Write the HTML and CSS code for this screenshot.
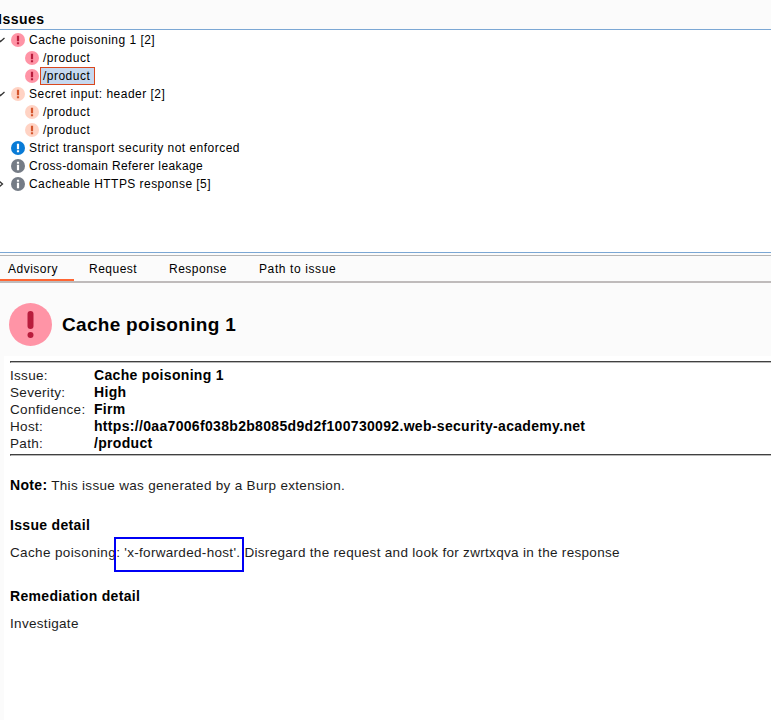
FILE: index.html
```html
<!DOCTYPE html>
<html lang="en">
<head>
<meta charset="utf-8">
<title>Issues</title>
<link rel="stylesheet" href="styles.css">
</head>
<body>
<svg class="defs" aria-hidden="true">
  <symbol id="bang" viewBox="0 0 43 43">
    <circle class="disc" cx="21.5" cy="21.5" r="21.5"/>
    <path class="mark" d="M21.5 11v12" stroke-width="6" stroke-linecap="round"/>
    <circle class="dot" cx="21.5" cy="32" r="3"/>
  </symbol>
  <symbol id="bang-small" viewBox="0 0 14 14">
    <circle class="disc" cx="7" cy="7" r="7"/>
    <path class="mark" d="M7 2.8v5.4M7 9.3v1.9" stroke-width="2.2"/>
  </symbol>
  <symbol id="info" viewBox="0 0 14 14">
    <circle class="disc" cx="7" cy="7" r="7"/>
    <path class="mark" d="M7 2.8v1.9M7 5.8v5.4" stroke-width="2.2"/>
  </symbol>
</svg>
<header class="head"><h1>Issues</h1></header>
<section class="tree">
  <div class="row"><svg class="arrow" viewBox="0 0 6 8"><path d="M-1 4l1.5 1.5L4.5 2"/></svg><svg class="icon high"><use href="#bang-small"/></svg><span class="t1">Cache poisoning 1 [2]</span></div>
  <div class="row child"><svg class="icon high"><use href="#bang-small"/></svg><span class="t2">/product</span></div>
  <div class="row child"><svg class="icon high"><use href="#bang-small"/></svg><span class="t2 selected">/product</span></div>
  <div class="row"><svg class="arrow" viewBox="0 0 6 8"><path d="M-1 4l1.5 1.5L4.5 2"/></svg><svg class="icon medium"><use href="#bang-small"/></svg><span class="t3">Secret input: header [2]</span></div>
  <div class="row child"><svg class="icon medium"><use href="#bang-small"/></svg><span class="t2">/product</span></div>
  <div class="row child"><svg class="icon medium"><use href="#bang-small"/></svg><span class="t2">/product</span></div>
  <div class="row"><svg class="icon low"><use href="#bang-small"/></svg><span class="t4">Strict transport security not enforced</span></div>
  <div class="row"><svg class="icon note"><use href="#info"/></svg><span class="t5">Cross-domain Referer leakage</span></div>
  <div class="row"><svg class="arrow" viewBox="0 0 6 8"><path d="M-1 1l3.5 3L-1 7"/></svg><svg class="icon note"><use href="#info"/></svg><span class="t6">Cacheable HTTPS response [5]</span></div>
</section>
<nav class="tabs">
  <span class="tab active">Advisory</span><span class="tab request">Request</span><span class="tab response">Response</span><span class="tab path">Path to issue</span>
</nav>
<main>
  <div class="title"><svg class="big high"><use href="#bang"/></svg><h2>Cache poisoning 1</h2></div>
  <article class="body">
    <div class="rule"></div>
    <dl class="facts">
      <dt>Issue:</dt><dd>Cache poisoning 1</dd>
      <dt>Severity:</dt><dd>High</dd>
      <dt>Confidence:</dt><dd>Firm</dd>
      <dt>Host:</dt><dd class="host">https://0aa7006f038b2b8085d9d2f100730092.web-security-academy.net</dd>
      <dt>Path:</dt><dd>/product</dd>
    </dl>
    <div class="rule"></div>
    <p class="remark"><b>Note:</b> <span>This issue was generated by a Burp extension.</span></p>
    <h3 class="h-detail">Issue detail</h3>
    <p class="detail"><span class="d1">Cache poisoning</span><span class="marked">: 'x-forwarded-host'.</span> <span class="d2">Disregard the request and look for zwrtxqva in the response</span></p>
    <h3 class="h-fix">Remediation detail</h3>
    <p class="fix">Investigate</p>
  </article>
</main>
</body>
</html>
```
FILE: styles.css
```css
* { box-sizing: border-box; margin: 0; padding: 0; }
body { width: 771px; height: 720px; overflow: hidden; background: #fbfbfb; color: #000; font: 12px/18px "Liberation Sans", sans-serif; white-space: nowrap; }
.defs { position: absolute; width: 0; height: 0; }
.head { height: 30px; padding-top: 10px; border-bottom: 1px solid #7ba7d4; }
h1 { font-size: 14px; line-height: 18px; letter-spacing: .5px; margin-left: -2px; }
.tree { height: 223px; padding-top: 1px; background: #fff; border-bottom: 1px solid #7ba7d4; }
.row { height: 18px; display: flex; align-items: center; padding-left: 11px; position: relative; letter-spacing: .48px; }
.t5 { letter-spacing: .38px; }
.t6 { letter-spacing: .45px; }
.child { padding-left: 25px; }
.arrow { position: absolute; left: 0; top: 5px; width: 6px; height: 8px; fill: none; stroke: #333; stroke-width: 1.3; }
.icon { width: 14px; height: 14px; margin-right: 4px; flex: none; }
.child .icon { margin-right: 1px; }
.t2 { border: 1px solid transparent; height: 18px; line-height: 16px; padding: 0 4px 0 2px; }
.selected { background: #c6d8ef; border-color: #d9481f; width: 55px; }
.mark { fill: none; stroke: currentColor; }
.dot { fill: currentColor; }
.disc { fill: var(--disc); }
.high { --disc: #ff94a6; color: #b81c3c; }
.medium { --disc: #ffd3c4; color: #d4552c; }
.low { --disc: #087bd7; color: #fff; }
.note { --disc: #757c86; color: #fff; }
.tabs { height: 28px; margin-top: 2px; border-top: 1px solid #b5b5b5; border-bottom: 2px solid #bfbbbb; display: flex; line-height: 26px; letter-spacing: .5px; }
.tab { height: 25px; }
.active { width: 74px; padding-left: 8px; border-bottom: 2px solid #ff6633; }
.request { margin-left: 15px; width: 80px; }
.response { width: 90px; }
.path { letter-spacing: .6px; }
.title { height: 73px; display: flex; align-items: center; padding: 10px 0 0 9px; }
.big { width: 43px; height: 43px; margin-right: 10px; }
h2 { font-size: 19px; line-height: 24px; letter-spacing: .3px; }
.body { background: #fff; height: 364px; margin-left: 4px; padding: 5px 0 0 6px; font-size: 13.5px; line-height: 17px; letter-spacing: .31px; }
.rule { height: 2px; border-top: 1px solid #404040; border-bottom: 1px solid #b8b8b8; border-left: 1px solid #404040; }
.facts { display: grid; grid-template-columns: 84px 1fr; grid-auto-rows: 17px; height: 91px; padding-top: 4px; }
dt, p { color: #1c1c1c; }
dd, h3, .remark b { font-weight: bold; font-size: 14px; letter-spacing: .32px; color: #000; }
.remark { margin-top: 21px; }
.h-detail { margin-top: 23px; }
.detail { margin-top: 10px; white-space: pre; }
.d1 { letter-spacing: .37px; }
.marked { position: relative; }
.marked::after { content: ""; box-sizing: border-box; position: absolute; left: -2px; top: -8px; width: 130px; height: 35px; border: 2px solid #0000f5; }
.h-fix { margin-top: 27px; }
.fix { margin-top: 10px; }
```
